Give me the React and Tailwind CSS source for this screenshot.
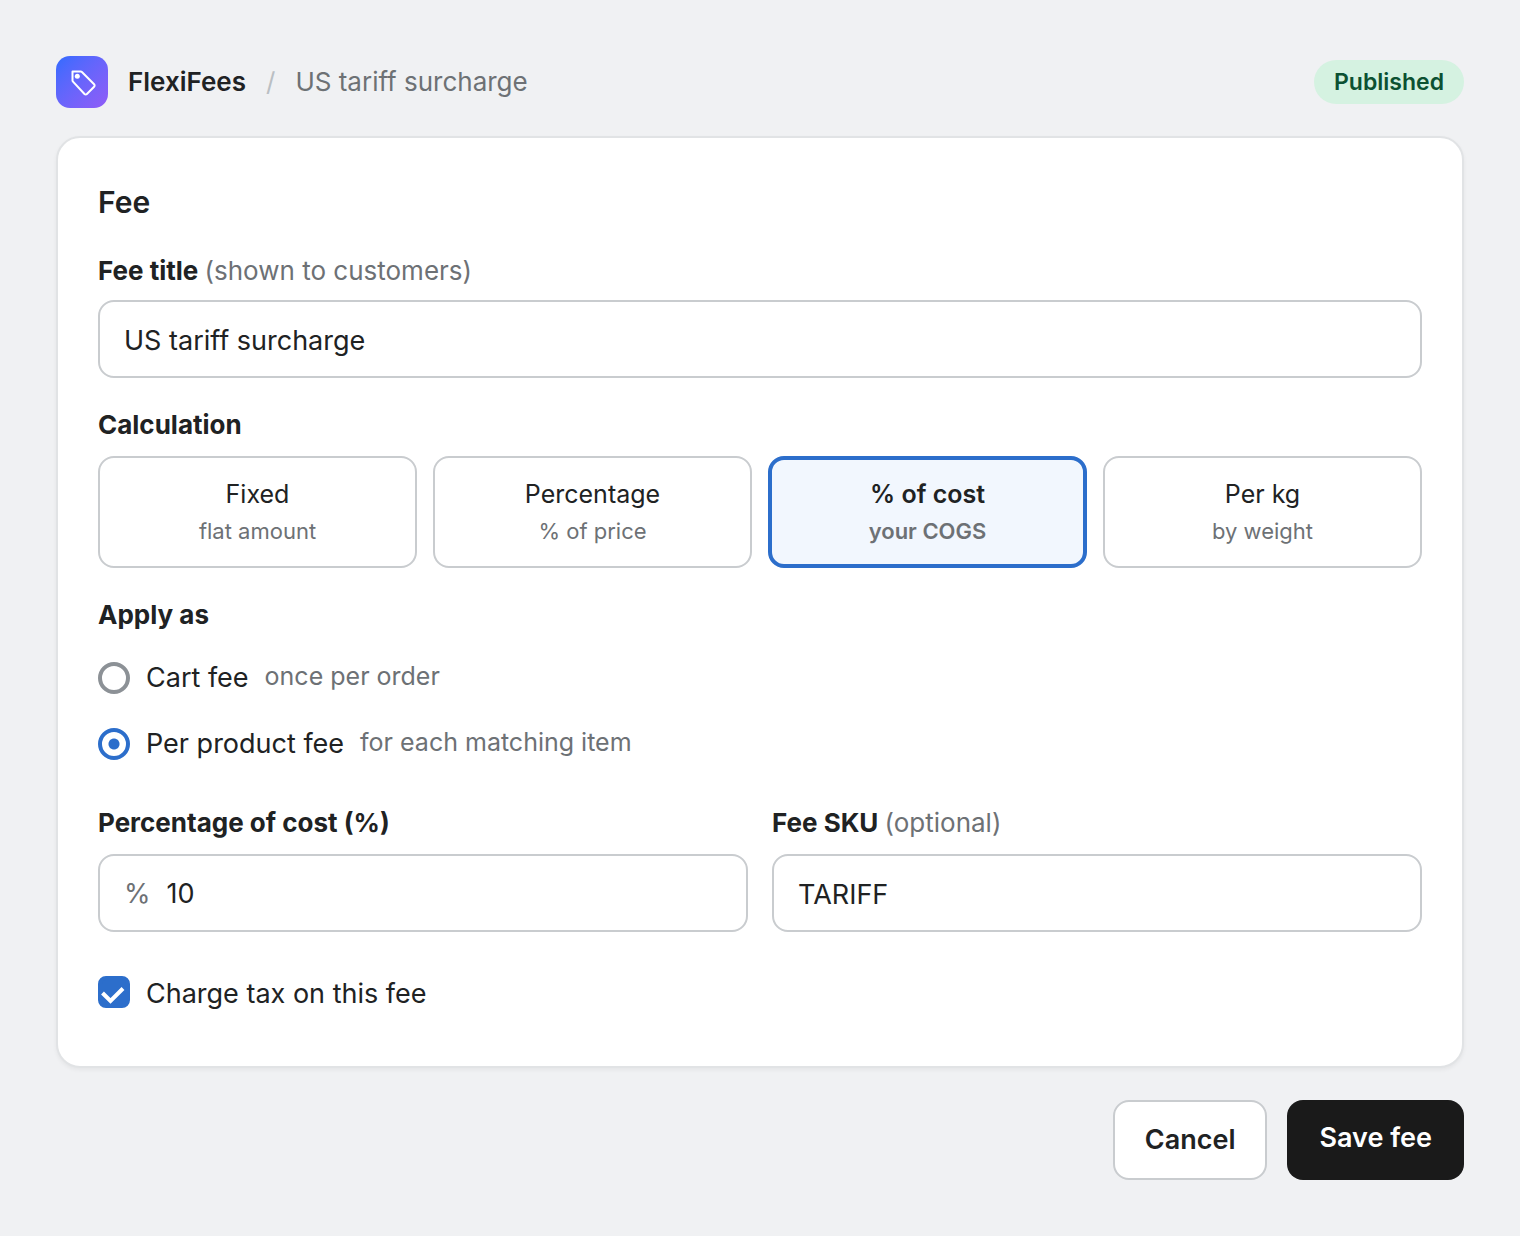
import React, { useState } from 'react';
import clsx from 'clsx';

const calculations = [
  { id: 'fixed', label: 'Fixed', hint: 'flat amount' },
  { id: 'percentage', label: 'Percentage', hint: '% of price' },
  { id: 'cost', label: '% of cost', hint: 'your COGS' },
  { id: 'weight', label: 'Per kg', hint: 'by weight' },
];

const applyOptions = [
  { id: 'cart', label: 'Cart fee', hint: 'once per order' },
  { id: 'product', label: 'Per product fee', hint: 'for each matching item' },
];

const labelClass = 'block text-[26px] leading-[38px] font-bold';
const hintClass = 'font-normal text-[#6d7175]';
const inputClass = 'w-full h-[78px] px-6 pt-0.5 rounded-2xl border-2 border-[#c9cccf] bg-white text-[27px] outline-none focus:border-[#2c6ecb]';

const TagIcon = () => (
  <svg className="size-[52px]" viewBox="0 0 52 52" fill="none" aria-hidden="true">
    <path
      d="M16.500 15.500h8.200c.5 0 .9.2 1.200.5l12.200 12.300c.7.7.7 1.700 0 2.400l-7.200 7.300c-.7.7-1.700.7-2.400 0L17 25.600c-.3-.3-.5-.7-.5-1.200z"
      stroke="white"
      strokeWidth="2"
      strokeLinejoin="round"
    />
    <circle cx="21.300" cy="20.300" r="2.500" fill="white" />
  </svg>
);

const App = () => {
  const [form, setForm] = useState({
    title: 'US tariff surcharge',
    calculation: 'cost',
    applyAs: 'product',
    amount: '10',
    sku: 'TARIFF',
    taxable: true,
  });

  const handleChange = (e) => {
    const { name, value, type, checked } = e.target;
    setForm({ ...form, [name]: type === 'checkbox' ? checked : value });
  };

  return (
    <div className="min-h-screen bg-[#f0f1f3] p-14 font-['Inter',sans-serif] text-[#202223]">
      {/* Header */}
      <header className="flex items-center justify-between mb-7">
        <div className="flex items-center gap-5 text-[26px] leading-[52px]">
          <span className="flex size-13 items-center justify-center rounded-[14px] bg-linear-135 from-[#2f6bff] to-[#8f5bf7]">
            <TagIcon />
          </span>
          <span className="font-semibold">FlexiFees</span>
          <span className="text-[#babfc3]">/</span>
          <span className="text-[#6d7175]">{form.title}</span>
        </div>
        <span className="rounded-full bg-[#d5f2e1] px-5 text-[23px] leading-11 font-semibold text-[#0c5132]">Published</span>
      </header>

      <form onSubmit={(e) => e.preventDefault()}>
        <div className="rounded-3xl border-2 border-[#e1e3e5] bg-white px-10 pt-[42px] pb-13 shadow-[0_2px_4px_rgba(0,0,0,0.05)]">
          <h2 className="mb-7 text-3xl leading-11 font-semibold">Fee</h2>

          {/* Title */}
          <div className="mb-7 space-y-2.5">
            <label htmlFor="title" className={labelClass}>
              Fee title <span className={hintClass}>(shown to customers)</span>
            </label>
            <input id="title" name="title" type="text" value={form.title} onChange={handleChange} className={inputClass} />
          </div>

          {/* Calculation */}
          <div className="mb-7 space-y-3">
            <div id="calculation" className={labelClass}>Calculation</div>
            <div role="group" aria-labelledby="calculation" className="grid grid-cols-4 gap-4">
              {calculations.map((item) => {
                const active = form.calculation === item.id;
                return (
                  <button
                    key={item.id}
                    type="button"
                    aria-pressed={active}
                    onClick={() => setForm({ ...form, calculation: item.id })}
                    className={clsx(
                      'flex h-28 flex-col items-center justify-center rounded-2xl',
                      active ? 'border-4 border-[#2c6ecb] bg-[#f2f7fe] font-semibold' : 'border-2 border-[#c9cccf] bg-white'
                    )}
                  >
                    <span className="text-[25px] leading-[38px]">{item.label}</span>
                    <span className="text-[22px] leading-9 text-[#6d7175]">{item.hint}</span>
                  </button>
                );
              })}
            </div>
          </div>

          {/* Apply as */}
          <div className="mb-7 space-y-3">
            <div id="apply-as" className={labelClass}>Apply as</div>
            <div role="radiogroup" aria-labelledby="apply-as" className="space-y-0.5">
              {applyOptions.map((item) => (
                <label key={item.id} className="flex h-16 items-center gap-4">
                  <input
                    type="radio"
                    name="applyAs"
                    value={item.id}
                    checked={form.applyAs === item.id}
                    onChange={handleChange}
                    className="size-8 shrink-0 appearance-none rounded-full border-4 border-[#8c9196] bg-white checked:border-[#2c6ecb] checked:bg-[radial-gradient(circle,#2c6ecb_5px,white_6px)]"
                  />
                  <span className="text-[27px] leading-10">{item.label}</span>
                  <span className="pb-1 text-[25px] leading-9 text-[#6d7175]">{item.hint}</span>
                </label>
              ))}
            </div>
          </div>

          {/* Amount + SKU */}
          <div className="mb-[38px] grid grid-cols-2 gap-6">
            <div className="space-y-3">
              <label htmlFor="amount" className={labelClass}>Percentage of cost (%)</label>
              <div className="flex h-[78px] items-center gap-4 rounded-2xl border-2 border-[#c9cccf] bg-white px-6 pt-0.5 text-[27px] focus-within:border-[#2c6ecb]">
                <span className="text-[#6d7175]">%</span>
                <input id="amount" name="amount" type="text" value={form.amount} onChange={handleChange} className="min-w-0 flex-1 outline-none" />
              </div>
            </div>
            <div className="space-y-3">
              <label htmlFor="sku" className={labelClass}>
                Fee SKU <span className={hintClass}>(optional)</span>
              </label>
              <input id="sku" name="sku" type="text" value={form.sku} onChange={handleChange} className={inputClass} />
            </div>
          </div>

          {/* Tax */}
          <label className="flex items-center gap-4">
            <span className="grid size-8 shrink-0">
              <input
                type="checkbox"
                name="taxable"
                checked={form.taxable}
                onChange={handleChange}
                className="peer col-start-1 row-start-1 size-8 appearance-none rounded-lg border-4 border-[#8c9196] checked:border-[#2c6ecb] checked:bg-[#2c6ecb]"
              />
              <svg className="pointer-events-none invisible col-start-1 row-start-1 size-8 peer-checked:visible" viewBox="0 0 32 32" fill="none" aria-hidden="true">
                <path d="M4.500 17l8 8L25 12.500" stroke="white" strokeWidth="4" />
              </svg>
            </span>
            <span className="pt-1 text-[27px] leading-10">Charge tax on this fee</span>
          </label>
        </div>

        {/* Actions */}
        <div className="mt-8 flex justify-end gap-5">
          <button type="button" className="h-20 rounded-2xl border-2 border-[#c9cccf] bg-white px-[30px] text-[27px] font-semibold">Cancel</button>
          <button type="submit" className="h-20 rounded-2xl bg-[#1a1a1a] px-8 pb-1 text-[27px] font-semibold text-white">Save fee</button>
        </div>
      </form>
    </div>
  );
};

export default App;
